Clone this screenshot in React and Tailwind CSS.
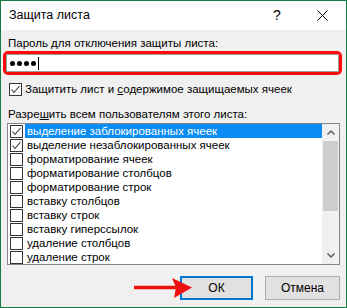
import React from "react";

const items = [
  { label: "выделение заблокированных ячеек", checked: true, selected: true },
  { label: "выделение незаблокированных ячеек", checked: true },
  { label: "форматирование ячеек" },
  { label: "форматирование столбцов" },
  { label: "форматирование строк" },
  { label: "вставку столбцов" },
  { label: "вставку строк" },
  { label: "вставку гиперссылок" },
  { label: "удаление столбцов" },
  { label: "удаление строк" },
];

function Check({ checked }) {
  return (
    <div className="w-[13px] h-[13px] border border-[#333333] bg-white shrink-0 relative">
      {checked && (
        <svg className="absolute left-0 top-0" width="11" height="11" viewBox="0 0 11 11">
          <polyline points="1.5,5.5 4,8.5 9.5,2" fill="none" stroke="#333333" strokeWidth="1.1" />
        </svg>
      )}
    </div>
  );
}

export default function App() {
  return (
    <div className="w-[347px] h-[308px] border border-[#167a45] bg-[#f0f0f0] flex flex-col text-[11.5px] text-black relative overflow-hidden font-['Liberation_Sans',sans-serif]">
      <div className="h-[29px] bg-white flex items-center shrink-0">
        <span className="pl-[8px] text-[12.5px]">Защита листа</span>
        <div className="ml-auto flex items-center">
          <span className="w-[12px] text-center text-[14px] mr-[34px]">?</span>
          <svg className="mr-[18px]" width="11" height="11" viewBox="0 0 11 11">
            <path d="M0.5 0.5 L10.5 10.5 M10.5 0.5 L0.5 10.5" stroke="#000" strokeWidth="1" />
          </svg>
        </div>
      </div>

      <div className="h-[16px] leading-[16px] mt-[5px] pl-[7px]">Пароль для отключения защиты листа:</div>

      <div className="ml-[2px] w-[339px] h-[24px] border-[3px] border-[#ff0a0a] rounded-[5px]">
        <div className="h-full bg-white border border-[#9a9a9a] flex items-center pl-[3px]">
          <span className="w-[5px] h-[5px] rounded-full bg-black mr-[2px]" />
          <span className="w-[5px] h-[5px] rounded-full bg-black mr-[2px]" />
          <span className="w-[5px] h-[5px] rounded-full bg-black mr-[2px]" />
          <span className="w-[5px] h-[5px] rounded-full bg-black mr-[2px]" />
          <span className="w-[1px] h-[13px] bg-black" />
        </div>
      </div>

      <div className="mt-[8px] h-[13px] flex items-center pl-[8px]">
        <Check checked />
        <span className="ml-[3px] leading-[13px]">
          Защитить лист и <span className="underline">с</span>одержимое защищаемых ячеек
        </span>
      </div>

      <div className="h-[16px] leading-[16px] mt-[10px] pl-[7px]">
        Разре<span className="underline">ш</span>ить всем пользователям этого листа:
      </div>

      <div className="mt-[1px] ml-[6px] w-[333px] h-[142px] border border-[#828790] bg-white flex">
        <div className="flex-1 overflow-hidden flex flex-col">
          {items.map((it, i) => (
            <div key={i} className="h-[14px] shrink-0 flex items-center pl-[2px]">
              <Check checked={it.checked} />
              <div
                className={
                  "ml-[2px] flex-1 h-[14px] leading-[14px] pl-[2px] " +
                  (it.selected ? "bg-[#0a8cf5] text-white" : "")
                }
              >
                {it.label}
              </div>
            </div>
          ))}
        </div>
        <div className="w-[17px] bg-[#f0f0f0] flex flex-col shrink-0">
          <div className="h-[17px] flex items-center justify-center">
            <svg width="8" height="5" viewBox="0 0 8 5">
              <polyline points="0.5,4.5 4,1 7.5,4.5" fill="none" stroke="#606060" strokeWidth="1.5" />
            </svg>
          </div>
          <div className="h-[70px] mx-[1px] bg-[#cdcdcd]" />
          <div className="flex-1" />
          <div className="h-[17px] flex items-center justify-center">
            <svg width="8" height="5" viewBox="0 0 8 5">
              <polyline points="0.5,0.5 4,4 7.5,0.5" fill="none" stroke="#606060" strokeWidth="1.5" />
            </svg>
          </div>
        </div>
      </div>

      <div className="mt-[11px] flex justify-end pr-[6px] gap-[12px] text-[12px]">
        <button className="w-[73px] h-[24px] border-2 border-[#0078d7] bg-[#e1e1e1] flex items-center justify-center">
          ОК
        </button>
        <button className="w-[75px] h-[24px] border border-[#adadad] bg-[#e1e1e1] flex items-center justify-center">
          Отмена
        </button>
      </div>

      <svg className="absolute left-[132px] top-[275px]" width="62" height="24" viewBox="0 0 62 24">
        <line x1="1" y1="11.5" x2="44" y2="11.5" stroke="#f01010" strokeWidth="3.5" />
        <polygon points="59,11.5 39,2 43,11.5 41,22" fill="#f01010" />
      </svg>
    </div>
  );
}
